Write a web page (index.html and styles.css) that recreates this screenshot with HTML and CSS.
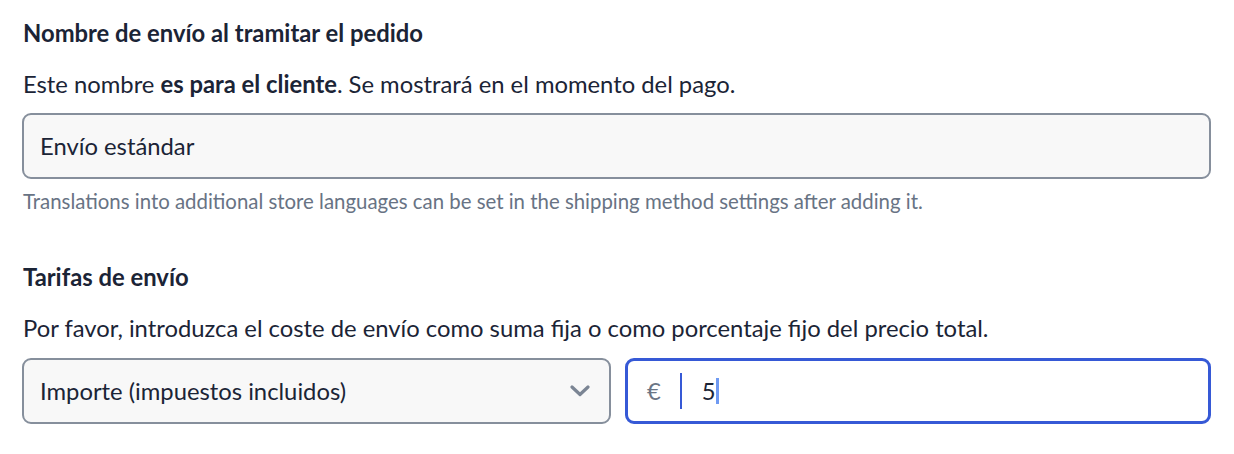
FILE: index.html
```html
<!DOCTYPE html>
<html lang="es">
<head>
<meta charset="utf-8">
<link rel="stylesheet" href="styles.css">
</head>
<body>
<div class="form">
  <section class="group">
    <h3 class="label">Nombre de envío al tramitar el pedido</h3>
    <p class="desc">Este nombre <strong>es para el cliente</strong>. Se mostrará en el momento del pago.</p>
    <div class="field"><span class="value">Envío estándar</span></div>
    <p class="hint">Translations into additional store languages can be set in the shipping method settings after adding it.</p>
  </section>
  <section class="group rates">
    <h3 class="label">Tarifas de envío</h3>
    <p class="desc">Por favor, introduzca el coste de envío como suma fija o como porcentaje fijo del precio total.</p>
    <div class="row">
      <div class="field select">
        <span class="value">Importe (impuestos incluidos)</span>
        <svg class="chev" width="20" height="12" viewBox="0 0 20 12"><path d="M2 2 L10 9.5 L18 2" fill="none" stroke="#7b8594" stroke-width="3.2" stroke-linecap="round" stroke-linejoin="round"/></svg>
      </div>
      <div class="field price">
        <span class="cur">€</span>
        <span class="sep"></span>
        <span class="value">5</span><span class="caret"></span>
      </div>
    </div>
  </section>
</div>
</body>
</html>
```
FILE: styles.css
```css
* { box-sizing: border-box; }
body {
  margin: 0;
  background: #fff;
  font-family: Lato, "Noto Sans", sans-serif;
  color: #1b2436;
}
.form {
  padding: 18px 23px 0 22px;
  width: 1234px;
}
.label {
  margin: 0 0 0 1px;
  font-size: 23.8px;
  font-weight: 700;
  line-height: 30px;
}
.desc {
  margin: 21px 0 0 1px;
  font-size: 23.8px;
  line-height: 30px;
}
.desc strong { font-weight: 700; }
.field {
  margin-top: 14px;
  height: 66px;
  border: 2px solid #868f9c;
  border-radius: 9px;
  background: #f8f8f8;
  display: flex;
  align-items: center;
  padding: 0 16px;
  font-size: 23.8px;
}
.hint {
  margin: 9px 0 0 1px;
  font-size: 20.4px;
  line-height: 26px;
  color: #687384;
}
.rates { margin-top: 48px; }
.row {
  display: flex;
  gap: 14px;
  margin-top: 15px;
}
.row .field { margin-top: 0; }
.select {
  width: 589px;
  justify-content: space-between;
  padding-right: 19px;
}
.chev { display: block; }
.price {
  flex: 1;
  background: #fff;
  border: 3px solid #3659d6;
  padding-left: 19px;
}
.cur { color: #6b7585; }
.sep {
  width: 2px;
  height: 36px;
  background: #3659d6;
  margin: 0 20px 0 19px;
}
.caret {
  width: 3px;
  height: 26px;
  background: #6f9af2;
}
```
